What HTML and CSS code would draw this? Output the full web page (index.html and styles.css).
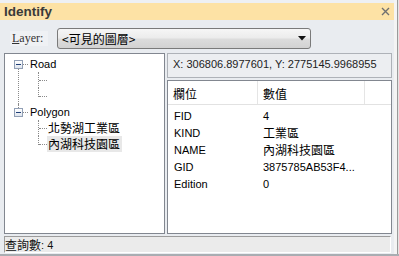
FILE: index.html
```html
<!DOCTYPE html>
<html lang="zh-Hant">
<head>
    <meta charset="UTF-8">
    <title>Identify</title>
    <link rel="stylesheet" href="styles.css">
</head>
<body>
    <div class="screen">
        <div class="panel">
            <div class="titlebar">
                <span class="title">Identify</span>
                <svg class="close" width="9" height="9" viewBox="0 0 9 9">
                    <path d="M1 1L8 8M8 1L1 8" stroke="#707070" stroke-width="1.4"/>
                </svg>
            </div>
            <div class="layer-row">
                <label class="layer-label"><u>L</u>ayer:</label>
                <div class="combo">
                    <span class="zh">&lt;可見的圖層&gt;</span>
                    <svg width="8" height="5" viewBox="0 0 8 5"><path d="M0 0H8L4 4.5Z" fill="#111"/></svg>
                </div>
            </div>
            <div class="content">
                <div class="tree-pane">
                    <ul class="tree">
                        <li class="first">
                            <div class="row"><span class="toggle"></span><span class="label">Road</span></div>
                            <ul>
                                <li><div class="row"></div></li>
                                <li class="last"><div class="row"></div></li>
                            </ul>
                        </li>
                        <li class="last">
                            <div class="row"><span class="toggle"></span><span class="label">Polygon</span></div>
                            <ul>
                                <li><div class="row"><span class="label zh">北勢湖工業區</span></div></li>
                                <li class="last"><div class="row"><span class="label zh selected">內湖科技園區</span></div></li>
                            </ul>
                        </li>
                    </ul>
                </div>
                <div class="result">
                    <div class="coords">X: 306806.8977601, Y: 2775145.9968955</div>
                    <div class="list">
                        <div class="list-head">
                            <div class="col col-name zh">欄位</div>
                            <div class="col col-value zh">數值</div>
                            <div class="col col-rest"></div>
                        </div>
                        <div class="list-body">
                            <div class="list-row"><span class="cell-name">FID</span><span class="cell-value">4</span></div>
                            <div class="list-row"><span class="cell-name">KIND</span><span class="cell-value zh">工業區</span></div>
                            <div class="list-row"><span class="cell-name">NAME</span><span class="cell-value zh">內湖科技園區</span></div>
                            <div class="list-row"><span class="cell-name">GID</span><span class="cell-value">3875785AB53F4...</span></div>
                            <div class="list-row"><span class="cell-name">Edition</span><span class="cell-value">0</span></div>
                        </div>
                    </div>
                </div>
            </div>
            <div class="status"><span class="zh">查詢數</span>: 4</div>
        </div>
        <div class="edge"></div>
    </div>
</body>
</html>
```

FILE: styles.css
```css
* {
    margin: 0;
    padding: 0;
    box-sizing: border-box;
    list-style: none;
}
body {
    width: 399px;
    height: 256px;
    overflow: hidden;
    font-family: "Liberation Sans", "Noto Sans CJK TC", sans-serif;
    font-size: 11px;
    color: #111;
    background: #e9ecf0;
}
.zh {
    font-family: "Noto Sans CJK TC", sans-serif;
    font-size: 12px;
}
.screen {
    display: flex;
    height: 256px;
    border-bottom: 2px solid #a9adb2;
}
.panel {
    width: 394px;
    display: flex;
    flex-direction: column;
    background: #e9ecf0;
    border-top: 3px solid #eef0f3;
}
.edge {
    width: 5px;
    background: linear-gradient(to right, #f4f4f4 0 3px, #9a9a9a 3px 4px, #e4e4e4 4px);
}

/* title */
.titlebar {
    height: 17px;
    display: flex;
    align-items: center;
    justify-content: space-between;
    padding: 0 4px 0 4px;
    background: #fde2a5;
}
.title {
    font-weight: bold;
    font-size: 13.5px;
    color: #3a3a3a;
}

/* layer select */
.layer-row {
    height: 33px;
    display: flex;
    align-items: center;
    padding: 8px 0 4px 10px;
}
.layer-label {
    width: 38px;
    height: 15px;
    padding-left: 2px;
    background: #eff1f4;
    font-family: "Liberation Serif", serif;
    font-size: 12px;
    line-height: 15px;
    color: #333;
}
.combo {
    width: 254px;
    height: 21px;
    margin-left: 9px;
    display: flex;
    align-items: center;
    justify-content: space-between;
    padding: 0 4px 0 4px;
    border: 1px solid #7a7a7a;
    border-radius: 3px;
    background: linear-gradient(to bottom, #f6f6f6, #ececec 45%, #dcdcdc 55%, #d2d2d2);
    color: #000;
}

/* panes */
.content {
    height: 181px;
    display: flex;
    gap: 2px;
    padding-left: 4px;
}
.tree-pane {
    width: 161px;
    border: 1px solid #828790;
    background: #fff;
}
.result {
    width: 225px;
    display: flex;
    flex-direction: column;
    gap: 2px;
}
.coords {
    height: 25px;
    display: flex;
    align-items: center;
    padding: 0 0 3px 5px;
    border: 1px solid #aeb2b8;
    background: #eceef1;
    color: #222;
}
.list {
    flex: 1;
    border: 1px solid #828790;
    background: #fff;
}

/* tree */
.tree {
    padding-top: 2px;
    color: #000;
}
.tree li {
    position: relative;
}
.row {
    height: 16px;
    display: flex;
    align-items: center;
    position: relative;
}
.tree > li::before {
    content: "";
    position: absolute;
    left: 13px;
    top: 0;
    bottom: 0;
    border-left: 1px dotted #8a8a8a;
}
.tree > li.first::before {
    top: 8px;
}
.tree > li.last::before {
    bottom: auto;
    height: 8px;
}
.tree > li > .row {
    padding-left: 9px;
}
.tree > li > .row::after {
    content: "";
    position: absolute;
    left: 18px;
    top: 8px;
    width: 5px;
    border-top: 1px dotted #8a8a8a;
}
.tree > li > .row .label {
    margin-left: 7px;
}
.toggle {
    width: 9px;
    height: 9px;
    display: flex;
    align-items: center;
    justify-content: center;
    border: 1px solid #919fb5;
    background: linear-gradient(#fff, #dfe5ee);
    position: relative;
    z-index: 1;
}
.toggle::after {
    content: "";
    width: 5px;
    height: 1px;
    background: #1f3f77;
}
.tree ul li::before {
    content: "";
    position: absolute;
    left: 33px;
    top: 0;
    bottom: 0;
    border-left: 1px dotted #8a8a8a;
}
.tree ul li.last::before {
    bottom: auto;
    height: 9px;
}
.tree ul .row {
    padding-left: 43px;
}
.tree ul .row::after {
    content: "";
    position: absolute;
    left: 34px;
    top: 8px;
    width: 8px;
    border-top: 1px dotted #8a8a8a;
}
.label {
    line-height: 16px;
    white-space: nowrap;
}
.label.selected {
    background: #e8e8e8;
    padding: 0 2px 0 1px;
    margin-left: -1px;
}

/* list view */
.list-head {
    height: 24px;
    display: flex;
    border-bottom: 1px solid #e2e2e2;
    color: #000;
}
.col {
    display: flex;
    align-items: center;
    padding-top: 1px;
    border-right: 1px solid #e5e5e5;
}
.col-name {
    width: 90px;
    padding-left: 5px;
}
.col-value {
    width: 107px;
    padding-left: 5px;
}
.col-rest {
    width: 24px;
    border-right: none;
}
.list-body {
    padding-top: 2px;
    color: #000;
}
.list-row {
    height: 17px;
    display: flex;
    align-items: center;
}
.cell-name {
    width: 90px;
    padding-left: 6px;
}
.cell-value {
    padding-left: 5px;
    white-space: nowrap;
}

/* status bar */
.status {
    height: 17px;
    margin: 2px 3px 0 4px;
    display: flex;
    align-items: center;
    border-top: 1px solid #9c9c9c;
    border-left: 1px solid #9c9c9c;
    border-bottom: 1px solid #fff;
    border-right: 1px solid #fff;
    background: #ebebeb;
    color: #111;
}
```
